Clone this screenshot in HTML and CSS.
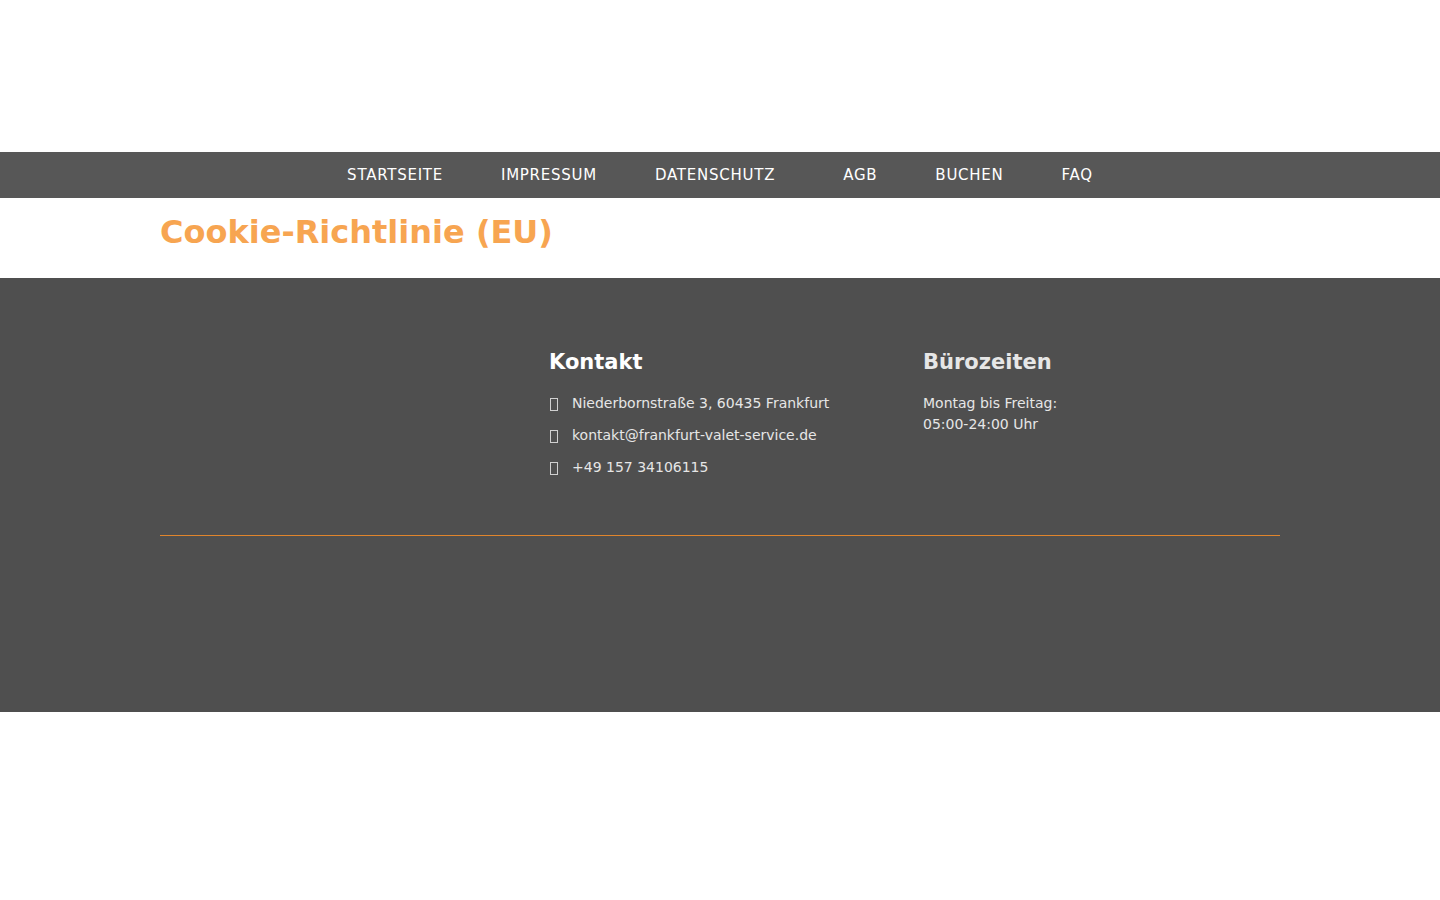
FILE: index.html
```html
<!DOCTYPE html>
<html lang="de">
<head>
    <meta charset="utf-8">
    <title>Cookie-Richtlinie (EU)</title>
    <link rel="stylesheet" href="styles.css">
</head>
<body>
    <header class="site-header"></header>
    <nav class="main-nav">
        <a href="#">STARTSEITE</a>
        <a href="#">IMPRESSUM</a>
        <a href="#" class="has-sub">DATENSCHUTZ</a>
        <a href="#">AGB</a>
        <a href="#">BUCHEN</a>
        <a href="#">FAQ</a>
    </nav>
    <main class="container">
        <h1>Cookie-Richtlinie (EU)</h1>
    </main>
    <footer class="site-footer">
        <div class="container">
            <div class="footer-columns">
                <div class="contact">
                    <h2>Kontakt</h2>
                    <ul>
                        <li><svg class="icon" width="9" height="15" viewBox="0 0 9 15"><rect x="1.5" y="2.5" width="7" height="12"/></svg>Niederbornstraße 3, 60435 Frankfurt</li>
                        <li><svg class="icon" width="9" height="15" viewBox="0 0 9 15"><rect x="1.5" y="2.5" width="7" height="12"/></svg>kontakt@frankfurt-valet-service.de</li>
                        <li><svg class="icon" width="9" height="15" viewBox="0 0 9 15"><rect x="1.5" y="2.5" width="7" height="12"/></svg>+49 157 34106115</li>
                    </ul>
                </div>
                <div class="hours">
                    <h2>Bürozeiten</h2>
                    <p>Montag bis Freitag:<br>05:00-24:00 Uhr</p>
                </div>
            </div>
        </div>
    </footer>
</body>
</html>
```

FILE: styles.css
```css
body {
    margin: 0;
    background: #fff;
    font-family: "DejaVu Sans", sans-serif;
    font-size: 14px;
    line-height: 21px;
}
.site-header {
    height: 152px;
}
.main-nav {
    display: flex;
    flex-wrap: wrap;
    justify-content: center;
    gap: 0 58px;
    padding: 12px 0;
    background: #575757;
}
.main-nav a {
    color: #fff;
    font-size: 15px;
    line-height: 22px;
    letter-spacing: 0.05em;
    text-decoration: none;
}
.main-nav .has-sub {
    padding-right: 10px;
}
.container {
    max-width: 1120px;
    margin: 0 auto;
}
h1 {
    margin: 0;
    padding: 14px 0 26px;
    color: #f7a551;
    font-size: 32px;
    line-height: 40px;
}
.site-footer {
    padding: 70px 0 176px;
    background: #4f4f4f;
    color: #e6e6e6;
}
.footer-columns {
    display: grid;
    grid-template-columns: 389px 374px 1fr;
    padding-bottom: 57px;
    border-bottom: 1px solid #e0852c;
}
.contact {
    grid-column: 2;
}
h2 {
    margin: 0 0 17px;
    font-size: 21px;
    line-height: 28px;
}
.contact h2 {
    color: #fff;
}
ul {
    margin: 0;
    padding: 0;
    list-style: none;
}
li {
    display: flex;
    align-items: center;
    gap: 14px;
    margin-bottom: 11px;
}
li:last-child {
    margin-bottom: 0;
}
.icon {
    fill: none;
    stroke: #d0d0d0;
}
p {
    margin: 0;
}
```
